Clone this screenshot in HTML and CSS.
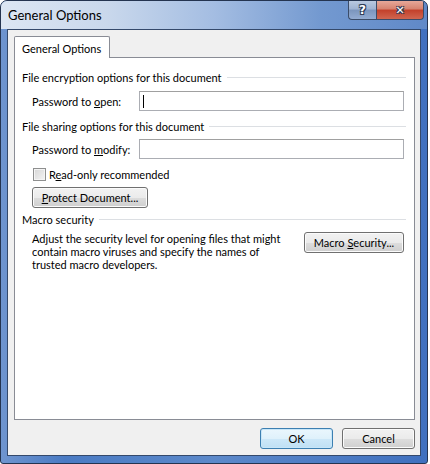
FILE: index.html
```html
<!DOCTYPE html>
<html lang="en">

<head>
    <meta charset="UTF-8">
    <title>General Options</title>
    <link rel="stylesheet" href="styles.css">
</head>

<body>
    <div class="window">
        <!-- title bar with the caption buttons -->
        <div class="titlebar">
            <span class="title">General Options</span>
            <div class="caption-btns">
                <span class="cap help">?</span>
                <span class="cap close">✕</span>
            </div>
        </div>

        <div class="client">
            <div class="tabs">
                <div class="tab">General Options</div>
            </div>

            <div class="panel">
                <div class="group-head">File encryption options for this document</div>
                <div class="field-row">
                    <label>Password to <u>o</u>pen:</label>
                    <div class="input"><span class="caret"></span></div>
                </div>

                <div class="group-head second">File sharing options for this document</div>
                <div class="field-row modify">
                    <label>Password to <u>m</u>odify:</label>
                    <div class="input"></div>
                </div>

                <div class="check-row">
                    <span class="checkbox"></span>
                    <span>R<u>e</u>ad-only recommended</span>
                </div>
                <button class="btn protect"><u>P</u>rotect Document...</button>

                <div class="group-head third">Macro security</div>
                <div class="macro-row">
                    <p class="macro-text">Adjust the security level for opening files that might contain macro viruses and specify the names of trusted macro developers.</p>
                    <button class="btn macro">Macro <u>S</u>ecurity...</button>
                </div>
            </div>

            <div class="footer">
                <button class="btn default">OK</button>
                <button class="btn">Cancel</button>
            </div>
        </div>
    </div>
</body>

</html>
```

FILE: styles.css
```css
body {
    margin: 0;
    background-color: #fff;
    font-family: "Segoe UI", Lato, "Noto Sans", sans-serif;
    font-size: 11px;
    color: #000;
}

/* window frame */
.window {
    width: 428px;
    height: 464px;
    box-sizing: border-box;
    border: 1px solid #243450;
    border-radius: 7px 7px 3px 3px;
    background: linear-gradient(to right, #6f95cf 0%, #4a7bc4 15%, #5c89ca 50%, #3f70bf 100%);
    display: flex;
    flex-direction: column;
    overflow: hidden;
}

.titlebar {
    height: 28px;
    flex-shrink: 0;
    display: flex;
    align-items: flex-start;
    padding-left: 7px;
    background: linear-gradient(to right, #dce6f3 0%, #c9d8ec 25%, #a4bde2 50%, #7399d0 75%, #6089c8 100%);
}

.title {
    font-size: 13px;
    line-height: 29px;
}

.caption-btns {
    margin-left: auto;
    margin-right: 3px;
    display: flex;
}

.cap {
    height: 19px;
    box-sizing: border-box;
    border: 1px solid #3b4c68;
    border-top: none;
    display: flex;
    align-items: center;
    justify-content: center;
    color: #fff;
    font-family: "DejaVu Sans", sans-serif;
    font-weight: bold;
    text-shadow: 1px 1px 0 #2a3a55, -1px -1px 0 #2a3a55, 1px -1px 0 #2a3a55, -1px 1px 0 #2a3a55;
}

.help {
    width: 28px;
    border-right: none;
    border-radius: 0 0 0 4px;
    background: linear-gradient(#b9c9e0 0%, #9fb3d2 45%, #7b95bd 50%, #93acd2 100%);
    font-size: 12px;
}

.close {
    width: 48px;
    border-radius: 0 0 4px 0;
    background: linear-gradient(#e7a899 0%, #d6826f 45%, #c3402a 50%, #d06650 100%);
    font-size: 11px;
}

/* client area */
.client {
    flex: 1;
    margin: 0 6px 7px 6px;
    border: 1px solid #34496b;
    background-color: #f0f0f0;
    display: flex;
    flex-direction: column;
    padding: 6px 5px 0 6px;
}

.tabs {
    display: flex;
}

.tab {
    position: relative;
    z-index: 1;
    width: 96px;
    height: 22px;
    box-sizing: border-box;
    margin-bottom: -1px;
    border: 1px solid #898c95;
    border-bottom: none;
    border-radius: 2px 2px 0 0;
    background-color: #fff;
    padding-left: 7px;
    line-height: 24px;
}

.panel {
    flex: 1;
    border: 1px solid #898c95;
    background-color: #fff;
    padding: 12px 8px 0 7px;
}

.group-head {
    display: flex;
    align-items: center;
    gap: 5px;
    line-height: 15px;
}

.group-head::after {
    content: "";
    flex: 1;
    height: 1px;
    background-color: #dcdfe3;
}

.group-head.second {
    margin-top: 8px;
}

.group-head.third {
    margin-top: 4px;
}

.field-row {
    display: flex;
    align-items: center;
    margin-top: 6px;
    padding-left: 10px;
}

.field-row.modify {
    margin-top: 5px;
}

.field-row label {
    width: 107px;
    white-space: nowrap;
}

.input {
    flex: 1;
    height: 20px;
    box-sizing: border-box;
    margin-right: 2px;
    border: 1px solid #abadb3;
    border-top-color: #a0a0a0;
    background-color: #fff;
    display: flex;
    align-items: center;
    padding-left: 3px;
}

.caret {
    width: 1px;
    height: 13px;
    background-color: #000;
}

.check-row {
    display: flex;
    align-items: center;
    gap: 3px;
    margin-top: 8px;
    padding-left: 11px;
    height: 14px;
}

.checkbox {
    width: 13px;
    height: 13px;
    box-sizing: border-box;
    border: 1px solid #8e8f8f;
    background: linear-gradient(135deg, #d6d6d6 0%, #f4f4f4 100%);
    box-shadow: inset 0 0 0 1px #f4f4f4;
}

/* buttons */
.btn {
    height: 21px;
    box-sizing: border-box;
    border: 1px solid #707070;
    border-radius: 3px;
    background: linear-gradient(#f2f2f2 0%, #ebebeb 50%, #dddddd 51%, #cfcfcf 100%);
    box-shadow: inset 0 0 0 1px #fbfbfb;
    font-family: inherit;
    font-size: 11px;
    color: #000;
    padding: 0;
}

.btn.protect {
    display: block;
    margin: 6px 0 0 10px;
    width: 116px;
}

.macro-row {
    display: flex;
    justify-content: space-between;
    align-items: flex-start;
    margin-top: 5px;
    padding-left: 10px;
}

.macro-text {
    margin: 0;
    width: 252px;
    line-height: 13px;
}

.btn.macro {
    width: 100px;
    margin-right: 2px;
}

.footer {
    display: flex;
    justify-content: flex-end;
    gap: 9px;
    padding: 8px 0 6px 0;
}

.footer .btn {
    width: 73px;
}

.btn.default {
    border-color: #3c7fb1;
    background: linear-gradient(#eaf6fd 0%, #dff1fb 50%, #cde8f8 51%, #bfe0f4 100%);
    box-shadow: inset 0 0 0 1px #c8e6f8;
}
```
